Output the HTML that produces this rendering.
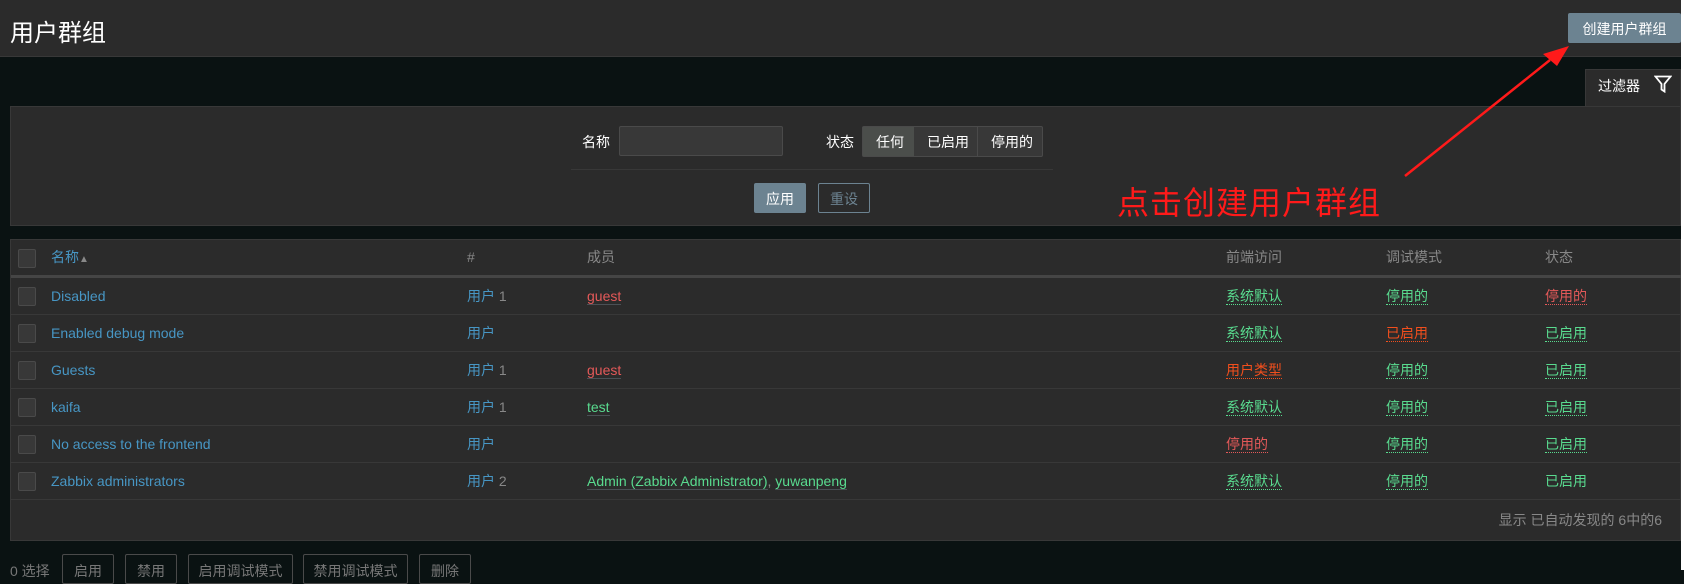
<!DOCTYPE html>
<html><head><meta charset="utf-8"><style>
*{box-sizing:border-box;margin:0;padding:0}
body{width:1684px;height:570px;overflow:hidden;background:#0a1212;font-family:"Liberation Sans","Noto Sans CJK SC",sans-serif;font-size:14px;position:relative;color:#f2f2f2}
.abs{position:absolute}
.hdr{left:0;top:0;width:1681px;height:57px;background:#2b2b2b;border-bottom:1px solid #383838}
.white{left:1681px;top:0;width:3px;height:570px;background:#fff}
.btn{position:absolute;border-radius:2px;text-align:center;font-size:14px}
.panel{left:10px;top:106px;width:1671px;height:120px;background:#2b2b2b;border:1px solid #383838}
.tab{left:1585px;top:69px;width:96px;height:38px;background:#2b2b2b;border:1px solid #383838;border-bottom:none}
.tbl{left:10px;top:239px;width:1671px;height:302px;background:#2b2b2b;border:1px solid #383838}
.row{position:absolute;left:0;width:1671px;height:37px;border-bottom:1px solid #383838}
.cb{position:absolute;left:7px;top:9px;width:18px;height:19px;border:1px solid #4a4a4a;background:#383838;border-radius:2px}
.c{position:absolute;top:11px;white-space:nowrap;font-size:14px;line-height:1}
.bl{color:#4796c4}.gr{color:#59db8f}.rd{color:#e45959}.or{color:#f24f1d}.gy{color:#888}
.u{border-bottom:1px solid #4a5055}
.d{border-bottom:1px dotted currentColor}
.bb{position:absolute;top:554px;height:30px;border:1px solid #4a4a4a;border-radius:2px;color:#777;font-size:14px;text-align:center;padding-top:6px}
</style></head><body>
<div class="abs hdr"></div>
<div class="abs" style="left:10px;top:13px;font-size:24px;color:#fff">用户群组</div>
<div class="btn" style="left:1568px;top:13px;width:113px;height:30px;background:#6c8391;color:#fff;padding-top:6px">创建用户群组</div>
<div class="abs tab"></div>
<div class="abs" style="left:1598px;top:76px;font-size:14px;color:#fff">过滤器</div>
<svg class="abs" style="left:1654px;top:75px" width="18" height="18" viewBox="0 0 18 18"><path d="M1.5 1.5H16.5L10.5 9V16.5L7.5 14.5V9Z" fill="none" stroke="#fff" stroke-width="1.8"/></svg>
<div class="abs panel"></div>
<div class="abs" style="left:582px;top:132px;color:#fff">名称</div>
<div class="abs" style="left:619px;top:126px;width:164px;height:30px;background:#383838;border:1px solid #4a4a4a;border-radius:2px"></div>
<div class="abs" style="left:826px;top:132px;color:#fff">状态</div>
<div class="abs" style="left:862px;top:126px;width:181px;height:31px;background:#383838;border:1px solid #4a4a4a;border-radius:2px"></div>
<div class="abs" style="left:863px;top:127px;width:51px;height:29px;background:#4b4e4b"></div>
<div class="abs" style="left:977px;top:127px;width:1px;height:29px;background:#4a4a4a"></div>
<div class="abs" style="left:876px;top:132px;color:#fff">任何</div>
<div class="abs" style="left:927px;top:132px;color:#fff">已启用</div>
<div class="abs" style="left:991px;top:132px;color:#fff">停用的</div>
<div class="abs" style="left:571px;top:169px;width:482px;height:1px;background:#383838"></div>
<div class="btn" style="left:754px;top:183px;width:52px;height:30px;background:#6c8391;color:#fff;padding-top:6px">应用</div>
<div class="btn" style="left:818px;top:183px;width:52px;height:30px;border:1px solid #6c8391;color:#6c8391;padding-top:5px">重设</div>
<div class="abs" style="left:1117px;top:178px;font-size:32px;color:#ff1a1a;letter-spacing:1px">点击创建用户群组</div>
<svg class="abs" style="left:0;top:0" width="1684" height="570"><line x1="1405" y1="176" x2="1550" y2="60" stroke="#ff1a1a" stroke-width="2.5"/><polygon points="1569,46 1543,54 1557,66" fill="#ff1a1a"/></svg>
<div class="abs tbl">
 <div class="row" style="top:0;height:38px;border-bottom:3px solid #454545"><div class="cb"></div>
  <div class="c bl" style="left:40px;top:10px">名称<span style="color:#888;font-size:10px">▲</span></div>
  <div class="c gy" style="left:456px;top:10px">#</div>
  <div class="c gy" style="left:576px;top:10px">成员</div>
  <div class="c gy" style="left:1215px;top:10px">前端访问</div>
  <div class="c gy" style="left:1375px;top:10px">调试模式</div>
  <div class="c gy" style="left:1534px;top:10px">状态</div></div>
 <div class="row" style="top:38px"><div class="cb"></div><div class="c bl" style="left:40px">Disabled</div><div class="c" style="left:456px"><span class="bl">用户</span> <span class="gy">1</span></div><div class="c rd" style="left:576px"><span class="u">guest</span></div><div class="c gr" style="left:1215px"><span class="d">系统默认</span></div><div class="c gr" style="left:1375px"><span class="d">停用的</span></div><div class="c rd" style="left:1534px"><span class="d">停用的</span></div></div>
 <div class="row" style="top:75px"><div class="cb"></div><div class="c bl" style="left:40px">Enabled debug mode</div><div class="c bl" style="left:456px">用户</div><div class="c gr" style="left:1215px"><span class="d">系统默认</span></div><div class="c or" style="left:1375px"><span class="d">已启用</span></div><div class="c gr" style="left:1534px"><span class="d">已启用</span></div></div>
 <div class="row" style="top:112px"><div class="cb"></div><div class="c bl" style="left:40px">Guests</div><div class="c" style="left:456px"><span class="bl">用户</span> <span class="gy">1</span></div><div class="c rd" style="left:576px"><span class="u">guest</span></div><div class="c or" style="left:1215px"><span class="d">用户类型</span></div><div class="c gr" style="left:1375px"><span class="d">停用的</span></div><div class="c gr" style="left:1534px"><span class="d">已启用</span></div></div>
 <div class="row" style="top:149px"><div class="cb"></div><div class="c bl" style="left:40px">kaifa</div><div class="c" style="left:456px"><span class="bl">用户</span> <span class="gy">1</span></div><div class="c gr" style="left:576px"><span class="u">test</span></div><div class="c gr" style="left:1215px"><span class="d">系统默认</span></div><div class="c gr" style="left:1375px"><span class="d">停用的</span></div><div class="c gr" style="left:1534px"><span class="d">已启用</span></div></div>
 <div class="row" style="top:186px"><div class="cb"></div><div class="c bl" style="left:40px">No access to the frontend</div><div class="c bl" style="left:456px">用户</div><div class="c rd" style="left:1215px"><span class="d">停用的</span></div><div class="c gr" style="left:1375px"><span class="d">停用的</span></div><div class="c gr" style="left:1534px"><span class="d">已启用</span></div></div>
 <div class="row" style="top:223px"><div class="cb"></div><div class="c bl" style="left:40px">Zabbix administrators</div><div class="c" style="left:456px"><span class="bl">用户</span> <span class="gy">2</span></div><div class="c gr" style="left:576px"><span class="u">Admin (Zabbix Administrator)</span><span class="gy">, </span><span class="u">yuwanpeng</span></div><div class="c gr" style="left:1215px"><span class="d">系统默认</span></div><div class="c gr" style="left:1375px"><span class="d">停用的</span></div><div class="c gr" style="left:1534px">已启用</div></div>
 <div class="c gy" style="right:18px;top:273px">显示 已自动发现的 6中的6</div>
</div>
<div class="abs" style="left:10px;top:561px;color:#777">0 选择</div>
<div class="bb" style="left:62px;width:52px">启用</div>
<div class="bb" style="left:125px;width:52px">禁用</div>
<div class="bb" style="left:188px;width:105px">启用调试模式</div>
<div class="bb" style="left:303px;width:105px">禁用调试模式</div>
<div class="bb" style="left:419px;width:52px">删除</div>
<div class="abs white"></div>
</body></html>
